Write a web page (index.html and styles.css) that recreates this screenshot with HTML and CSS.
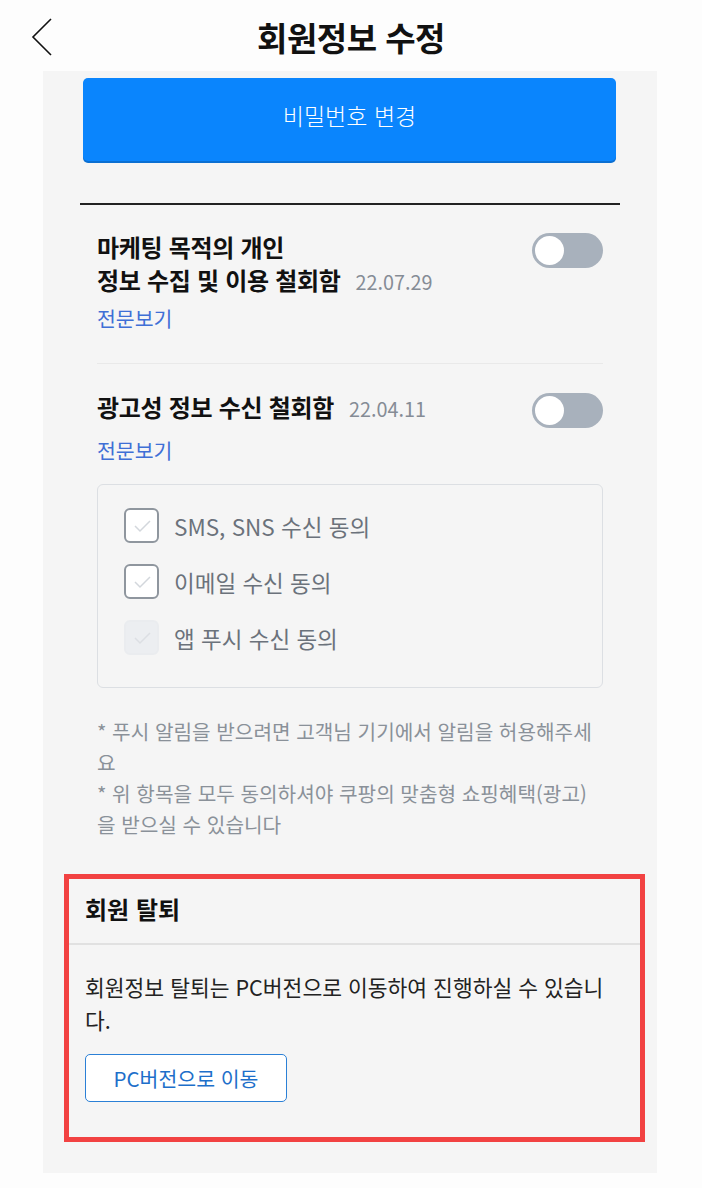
FILE: index.html
```html
<!DOCTYPE html>
<html lang="ko">
<head>
  <meta charset="UTF-8" />
  <title>회원정보 수정</title>
  <meta name="viewport" content="width=device-width, initial-scale=1.0" />
  <link rel="stylesheet" href="styles.css">
</head>
<body>

  <header class="top-bar">
    <button class="btn-back" aria-label="뒤로">
      <svg width="22" height="38" viewBox="0 0 22 38">
        <polyline points="20,1 2,19 20,37" fill="none" stroke="#111" stroke-width="1.6" />
      </svg>
    </button>
    <h1>회원정보 수정</h1>
    <span></span>
  </header>

  <main class="panel">
    <button class="btn-primary">비밀번호 변경</button>

    <div class="consent-list">
      <section class="consent">
        <div class="consent-head">
          <h2>마케팅 목적의 개인<br>정보 수집 및 이용 철회함<span class="date">22.07.29</span></h2>
          <span class="switch"><span class="knob"></span></span>
        </div>
        <a class="link-more">전문보기</a>
      </section>

      <section class="consent last">
        <div class="consent-head">
          <h2>광고성 정보 수신 철회함<span class="date">22.04.11</span></h2>
          <span class="switch"><span class="knob"></span></span>
        </div>
        <a class="link-more">전문보기</a>

        <div class="check-box">
          <label class="check-row">
            <span class="check"><svg width="20" height="14" viewBox="0 0 20 14"><polyline points="3,7 8,12 18,2" fill="none" stroke="#d3d7dc" stroke-width="1.5" /></svg></span>
            SMS, SNS 수신 동의
          </label>
          <label class="check-row">
            <span class="check"><svg width="20" height="14" viewBox="0 0 20 14"><polyline points="3,7 8,12 18,2" fill="none" stroke="#d3d7dc" stroke-width="1.5" /></svg></span>
            이메일 수신 동의
          </label>
          <label class="check-row">
            <span class="check disabled"><svg width="20" height="14" viewBox="0 0 20 14"><polyline points="3,7 8,12 18,2" fill="none" stroke="#dcdfe3" stroke-width="1.5" /></svg></span>
            앱 푸시 수신 동의
          </label>
        </div>

        <p class="notes">* 푸시 알림을 받으려면 고객님 기기에서 알림을 허용해주세요<br>* 위 항목을 모두 동의하셔야 쿠팡의 맞춤형 쇼핑혜택(광고)을 받으실 수 있습니다</p>
      </section>
    </div>

    <section class="withdraw">
      <h3>회원 탈퇴</h3>
      <div class="withdraw-body">
        <p>회원정보 탈퇴는 PC버전으로 이동하여 진행하실 수 있습니다.</p>
        <button class="btn-outline">PC버전으로 이동</button>
      </div>
    </section>
  </main>

</body>
</html>
```

FILE: styles.css
```css
body {
  margin: 0;
  background: #fdfdfd;
  font-family: "Noto Sans CJK KR", "Noto Sans", sans-serif;
  color: #111;
}

.top-bar {
  display: grid;
  grid-template-columns: 1fr auto 1fr;
  align-items: center;
  height: 71px;
  padding-top: 2px;
  box-sizing: border-box;
}

.btn-back {
  justify-self: start;
  margin-left: 31px;
  padding: 0;
  border: none;
  background: none;
  display: flex;
}

h1 {
  margin: 0;
  font-size: 33px;
  font-weight: bold;
  letter-spacing: -0.5px;
}

.panel {
  margin: 0 45px 16px 43px;
  padding: 7px 37px 31px;
  background: #f5f5f5;
}

.btn-primary {
  display: block;
  width: calc(100% - 7px);
  margin: 0 4px 0 3px;
  height: 83px;
  padding: 0 0 9px;
  border: none;
  border-radius: 5px;
  background: #0a85fd;
  box-shadow: 0 2px 0 #0b6fd2;
  color: white;
  font-family: inherit;
  font-size: 23px;
  font-weight: 300;
}

.consent-list {
  margin-top: 42px;
  border-top: 2px solid #222;
  padding: 0 17px;
}

.consent {
  padding: 25px 0 30px;
  border-bottom: 1px solid #e9e9e9;
}

.consent.last {
  padding-top: 26px;
  padding-bottom: 0;
  border-bottom: none;
}

.consent-head {
  display: flex;
  justify-content: space-between;
  align-items: flex-start;
}

h2 {
  margin: 0;
  font-size: 24px;
  line-height: 33px;
  font-weight: bold;
  letter-spacing: -0.3px;
}

.date {
  margin-left: 15px;
  font-size: 19.8px;
  line-height: 1;
  font-weight: normal;
  color: #858c95;
  letter-spacing: 0;
}

.switch {
  width: 71px;
  height: 35px;
  margin-top: 3px;
  border-radius: 18px;
  background: #a8b1bc;
  padding: 3px;
  box-sizing: border-box;
  flex-shrink: 0;
}

.knob {
  display: block;
  width: 29px;
  height: 29px;
  border-radius: 50%;
  background: #fff;
}

.link-more {
  display: block;
  margin-top: 7px;
  font-size: 20.5px;
  line-height: 30px;
  color: #3f6fd6;
}

.check-box {
  margin-top: 19px;
  border: 1px solid #dcdfe3;
  border-radius: 6px;
  padding: 23px 26px 32px;
  display: flex;
  flex-direction: column;
  gap: 21px;
}

.check-row {
  display: flex;
  align-items: center;
  gap: 15px;
  height: 35px;
  font-size: 22.5px;
  color: #6b727b;
}

.check {
  width: 35px;
  height: 35px;
  box-sizing: border-box;
  border: 2px solid #8f969e;
  border-radius: 6px;
  background: #fff;
  display: flex;
  align-items: center;
  justify-content: center;
}

.check.disabled {
  border-color: #eaecef;
  background: #eceef1;
}

.notes {
  margin: 28px 0 0;
  font-size: 20.2px;
  line-height: 31px;
  color: #8a9199;
}

.withdraw {
  margin: 34px -25px 0 -16px;
  border: 5px solid #f24242;
}

h3 {
  margin: 0;
  padding: 15px 16px 19px;
  font-size: 24px;
  line-height: 30px;
  font-weight: bold;
  border-bottom: 2px solid #e1e1e1;
}

.withdraw-body {
  padding: 25px 22px 35px 16px;
}

.withdraw-body p {
  margin: 0;
  font-size: 21.5px;
  line-height: 33px;
  color: #222;
}

.btn-outline {
  margin-top: 18px;
  width: 202px;
  height: 48px;
  background: #fff;
  border: 1.5px solid #2b80d6;
  border-radius: 5px;
  color: #1d6fca;
  font-family: inherit;
  font-size: 20.5px;
}
```
